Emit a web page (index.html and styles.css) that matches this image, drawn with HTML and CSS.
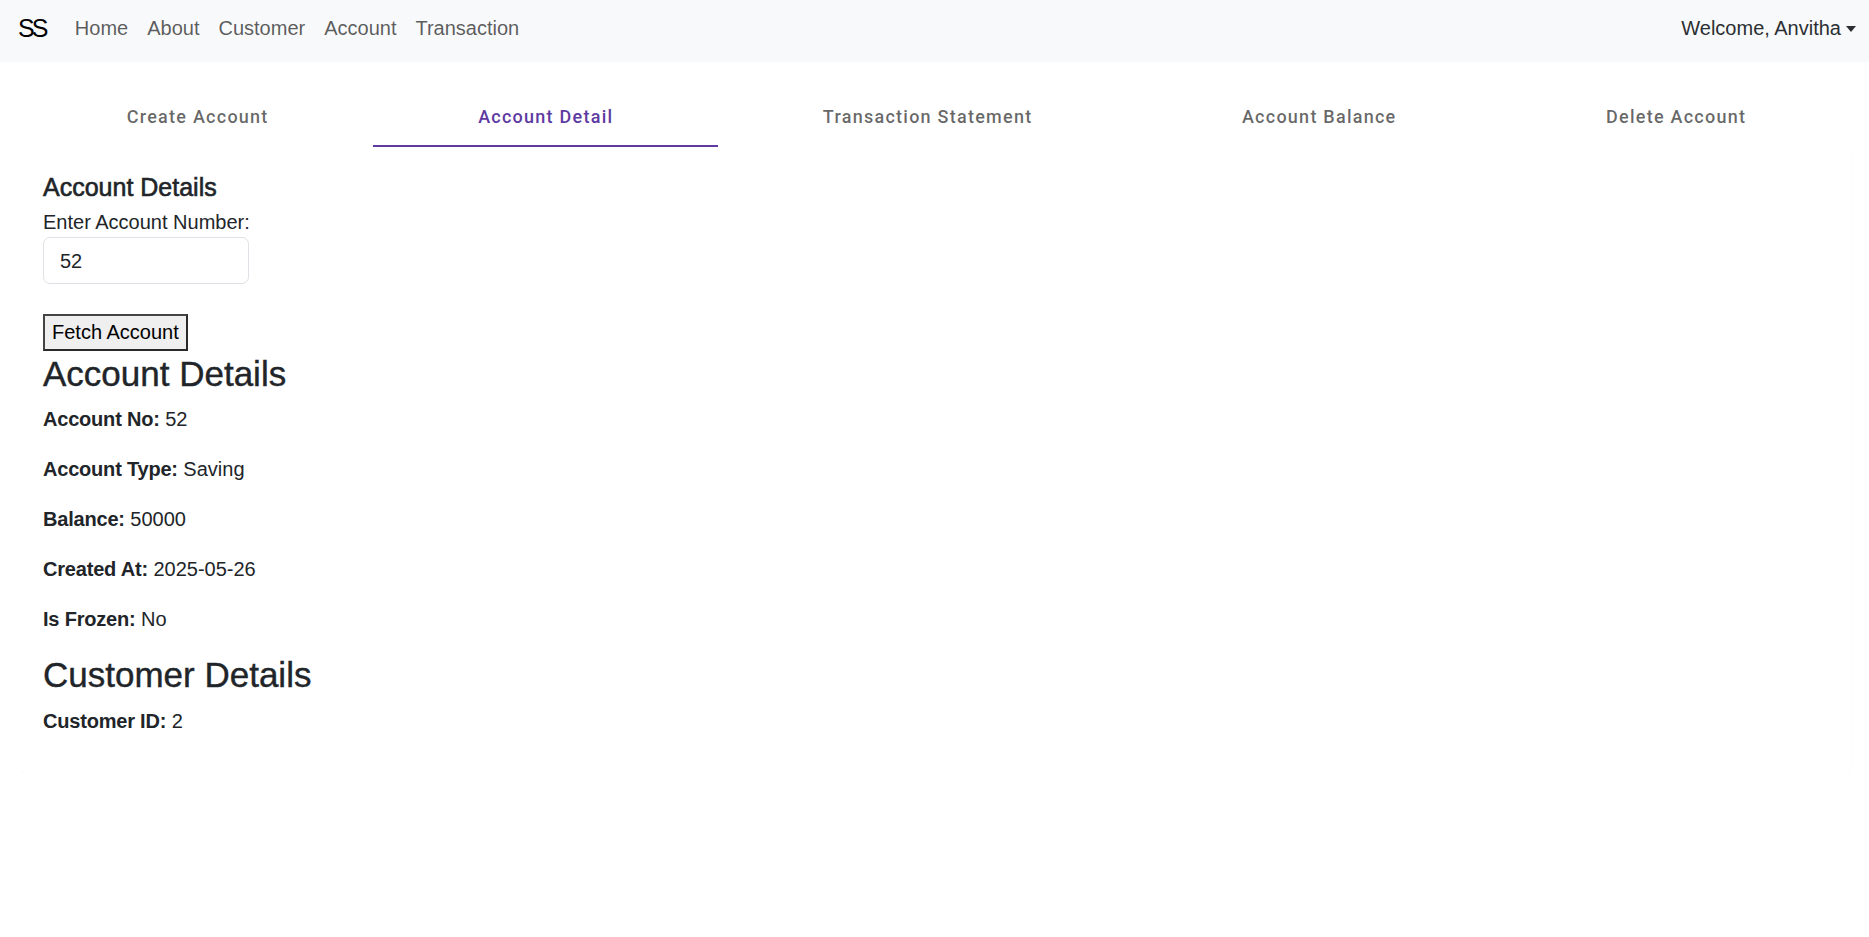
FILE: index.html
```html
<!DOCTYPE html>
<html lang="en">
<head>
<meta charset="utf-8">
<title>Account Detail</title>
<link rel="stylesheet" href="styles.css">
</head>
<body>
<nav class="navbar">
  <div class="nav-left">
    <a class="brand" href="#">SS</a>
    <a class="nav-link" href="#">Home</a>
    <a class="nav-link" href="#">About</a>
    <a class="nav-link" href="#">Customer</a>
    <a class="nav-link" href="#">Account</a>
    <a class="nav-link" href="#">Transaction</a>
  </div>
  <div class="user-menu">Welcome, Anvitha<span class="caret"></span></div>
</nav>

<div class="tabs-wrap">
  <div class="tabs">
    <button class="tab">Create Account</button>
    <button class="tab active">Account Detail</button>
    <button class="tab">Transaction Statement</button>
    <button class="tab">Account Balance</button>
    <button class="tab">Delete Account</button>
  </div>
  <div class="paper">
    <h5 class="form-title">Account Details</h5>
    <label class="field-label" for="acc">Enter Account Number:</label>
    <input class="form-control" id="acc" type="text" value="52">
    <button class="fetch-btn">Fetch Account</button>
    <h3 class="section-title">Account Details</h3>
    <p class="row"><strong>Account No:</strong> 52</p>
    <p class="row"><strong>Account Type:</strong> Saving</p>
    <p class="row"><strong>Balance:</strong> 50000</p>
    <p class="row"><strong>Created At:</strong> 2025-05-26</p>
    <p class="row"><strong>Is Frozen:</strong> No</p>
    <h3 class="section-title">Customer Details</h3>
    <p class="row"><strong>Customer ID:</strong> 2</p>
  </div>
</div>
</body>
</html>
```

FILE: styles.css
```css
* { box-sizing: border-box; }

html, body {
  margin: 0;
  padding: 0;
  background: #ffffff;
}

body {
  font-family: "Liberation Sans", Arial, sans-serif;
  font-size: 20px;
  line-height: 30px;
  color: #212529;
}

.navbar {
  height: 62px;
  background: #f8f9fa;
  display: flex;
  justify-content: space-between;
  align-items: flex-start;
  padding: 13px 13px 0 18px;
}

.nav-left {
  display: flex;
  align-items: flex-start;
}

.brand {
  font-size: 25px;
  line-height: 30px;
  color: #000;
  text-decoration: none;
  letter-spacing: -3px;
  margin-right: 20px;
}

.nav-link {
  color: rgba(0, 0, 0, 0.65);
  text-decoration: none;
  padding: 0 9.5px;
  line-height: 30px;
}

.user-menu {
  color: #2b2f33;
  line-height: 30px;
  display: flex;
  align-items: center;
}

.caret {
  display: inline-block;
  margin-left: 5px;
  margin-top: 2px;
  width: 0;
  height: 0;
  border-top: 6px solid #2b2f33;
  border-left: 5.5px solid transparent;
  border-right: 5.5px solid transparent;
}

.tabs-wrap {
  margin: 25px 18px 0 22px;
}

.tabs {
  display: flex;
  height: 60px;
}

.tab {
  flex: 1 1 auto;
  height: 60px;
  padding: 0 20px;
  border: 0;
  border-bottom: 2px solid transparent;
  background: transparent;
  font-family: Roboto, "Liberation Sans", sans-serif;
  font-weight: 500;
  font-size: 18px;
  letter-spacing: 1.25px;
  color: rgba(0, 0, 0, 0.6);
  white-space: nowrap;
  cursor: pointer;
}

.tab.active {
  color: #5e3aa2;
  border-bottom-color: #5e3aa2;
}

.paper {
  background: #fff;
  border-radius: 5px;
  box-shadow: 0 1px 2px rgba(0, 0, 0, 0.035);
  padding: 25px 21px 18px 21px;
}

.form-title {
  font-size: 25px;
  line-height: 30px;
  font-weight: 500;
  -webkit-text-stroke: 0.6px #212529;
  margin: 0 0 6px 0;
}

.field-label {
  display: block;
  line-height: 29px;
}

.form-control {
  display: block;
  width: 206px;
  height: 47px;
  padding: 8px 15px 7px 16px;
  border: 1px solid #dee2e6;
  border-radius: 7px;
  font-family: "Liberation Sans", Arial, sans-serif;
  font-size: 20px;
  line-height: 30px;
  color: #212529;
  background: #fff;
  outline: none;
}

.fetch-btn {
  display: block;
  margin-top: 30px;
  padding: 1px 7px 2px 7px;
  border: 2px solid #2a2a2a;
  border-top-color: #444;
  border-left-color: #444;
  background: #efefef;
  font-family: "Liberation Sans", Arial, sans-serif;
  font-size: 20px;
  line-height: 30px;
  color: #000;
}

.section-title {
  font-size: 35px;
  line-height: 42px;
  font-weight: 500;
  -webkit-text-stroke: 0.4px #212529;
  margin: 2px 0 9px 0;
}

.row {
  margin: 0 0 20px 0;
  line-height: 30px;
}

.row strong {
  letter-spacing: -0.2px;
}

.row + .section-title { margin-top: 0; margin-bottom: 10px; }
```
